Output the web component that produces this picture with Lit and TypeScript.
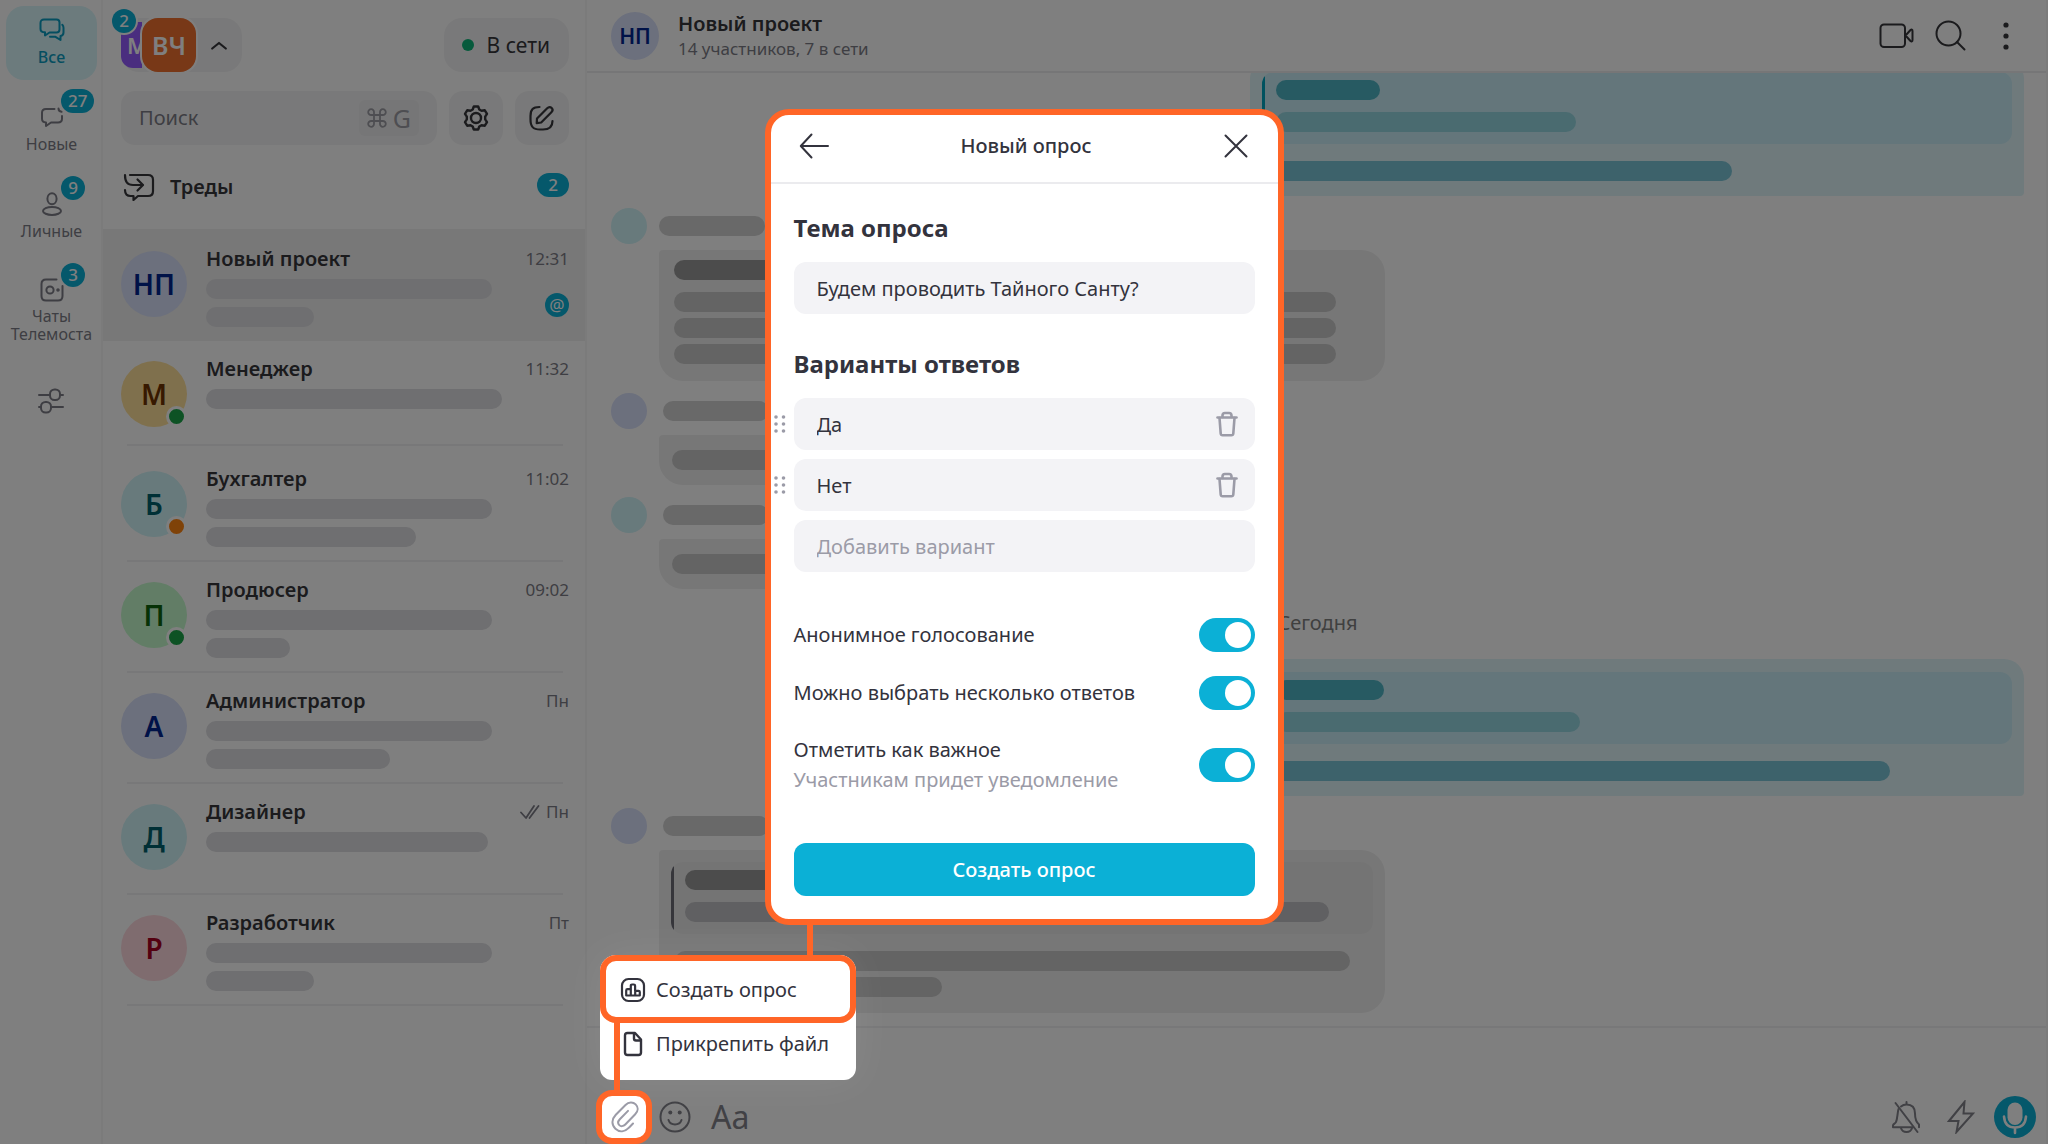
import { LitElement, html, css, svg, nothing, TemplateResult } from "lit";
import { customElement } from "lit/decorators.js";
import { classMap } from "lit/directives/class-map.js";
import { styleMap } from "lit/directives/style-map.js";

/* ---------- icons ---------- */

const icon = (w: number, h: number, body: TemplateResult, stroke = 2) => html`<svg
  width=${w}
  height=${h}
  viewBox="0 0 ${w} ${h}"
  fill="none"
  stroke="currentColor"
  stroke-width=${stroke}
  stroke-linecap="round"
  stroke-linejoin="round"
  aria-hidden="true"
>${body}</svg>`;

const icons = {
  all: icon(26, 24, svg`
    <path d="M5 1.5h12.5c2 0 3 1 3 3v7c0 2-1 3-3 3h-7L6 17.500v-3.200c-2.600 0-4.500-1-4.500-3.300V5c0-2.300 1.200-3.500 3.500-3.500z"/>
    <path d="M23.300 6.800c.8.800 1.200 1.700 1.200 3v4.700c0 2-1 3.200-3 3.500v4l-5-3.200h-5.500"/>`),
  fresh: icon(24, 22, svg`
    <path d="M14.500 3H6C3.500 3 2 4.300 2 6.800v6c0 2.400 1.300 3.600 4 3.700V20l5-3.500h7c2.500 0 4-1.200 4-3.700V10"/>
    <path d="M18.500 2.500c0 1.800 1 3 3 3.300"/>`),
  person: icon(24, 24, svg`
    <ellipse cx="12" cy="6.800" rx="4.600" ry="5.500"/>
    <ellipse cx="12" cy="18.900" rx="9" ry="4"/>`),
  telemost: icon(24, 24, svg`
    <path d="M16.500 1.500H6C3 1.500 1.500 3 1.500 6v12c0 3 1.500 4.500 4.500 4.500h12c3 0 4.500-1.500 4.500-4.500V8"/>
    <circle cx="10" cy="12" r="3.600"/><circle cx="18" cy="12" r=".8" fill="currentColor"/>`),
  sliders: icon(26, 26, svg`
    <path d="M1 7h10M22 7h3M1 19h2M13.500 19H25"/>
    <rect x="12" y="1.500" width="10" height="10.500" rx="4.500"/>
    <rect x="3" y="14" width="10" height="10.500" rx="4.500"/>`),
  up: icon(16, 9, svg`<path d="M1.200 7.500L8 2l6.800 5.500"/>`, 2.2),
  gear: icon(28, 28, svg`
    <path d="M11.800 2.500h4.400l1.100 3 2.200 1.200 3.300-.4 2.200 3.600-1.800 2.700v2.800l1.800 2.700-2.200 3.600-3.300-.4-2.200 1.200-1.100 3h-4.400l-1.100-3-2.200-1.200-3.300.4L3 18.100l1.800-2.700v-2.800L3 9.900l2.200-3.600 3.300.4 2.200-1.200z"/>
    <circle cx="14" cy="14" r="5"/>`, 2.4),
  edit: icon(28, 28, svg`
    <path d="M11.500 3C5 3 2.500 5.500 2.500 12v3.500c0 7 2.500 10 9.500 10h3c6.500 0 9.500-2.500 9.500-8.500"/>
    <path d="M9 14.500L19.200 4.200c1.600-1.600 3.200-1.500 4.500-.2s1.200 2.800-.3 4.300L13.200 18.500 8.700 19.200z"/>`, 2.2),
  threads: icon(32, 28, svg`
    <path d="M7 2h18c3 0 5 1.600 5 4.800v11.400c0 3.200-2 4.800-5 4.800H15l-4.500 4v-4H7.500C4.300 23 2 21.500 2 17"/>
    <path d="M2 2c0 7 2.500 10 8 10h9.500"/><path d="M14.500 6.500l5.500 5.500-5.500 5.500"/>`, 2.2),
  checks: icon(20, 16, svg`<path d="M1 8.500L6 14 14 2M9.500 14L18.500 2"/>`, 1.800),
  video: icon(36, 26, svg`
    <rect x="1.500" y="1.500" width="24.500" height="22.500" rx="3.500"/>
    <path d="M26.500 12.500l5-5.500c1-.9 2-.5 2 .9v9.200c0 1.400-1 1.800-2 .9z"/>`),
  search: icon(32, 32, svg`<circle cx="13.500" cy="13.500" r="12"/><path d="M22 22l7.500 7.500"/>`),
  dots: icon(8, 30, svg`<g fill="currentColor" stroke="none"><circle cx="4" cy="4" r="2.600"/><circle cx="4" cy="15" r="2.600"/><circle cx="4" cy="26" r="2.600"/></g>`),
  clip: icon(30, 32, svg`
    <path d="M24 22.500l-3.600 3.700c-4.600 4.700-10 5.300-14 1.600-4.100-3.800-3.900-9.500.4-14L16.500 4c3.200-3.200 7.500-3.300 10.200-.6s2.600 6.700-.5 9.900L16.300 23.500c-2 2-4.500 2.100-6 .6s-1.400-3.900.5-5.900l8.200-8.300"/>`),
  smile: icon(32, 32, svg`
    <circle cx="16" cy="16" r="14.500"/><path d="M9.500 19c1 3 3.500 4.500 6.500 4.500s5.500-1.500 6.500-4.500"/>
    <g fill="currentColor" stroke="none"><circle cx="11.300" cy="11.500" r="2"/><circle cx="20.700" cy="11.500" r="2"/></g>`),
  mute: icon(30, 34, svg`
    <path d="M15.500 2v2.500M10 6.500c1.500-1.300 3.300-2 5.500-2 5.500 0 8.500 3.500 8.500 9 0 5 1 8.500 4 11v2.800M7.500 9c-1.200 4.500-1 9.500-2.500 13-.6 1.500-3 2-3 3.500v1.800h20"/>
    <path d="M10 28c.8 3 2.500 4 5.500 4s4.700-1 5.500-4M4.500 3L26.500 32"/>`),
  bolt: icon(28, 34, svg`<path d="M17.500 2L2 21h9.500L9.500 32 26 13.500h-9.500z" stroke-linejoin="miter"/>`),
  mic: icon(42, 42, svg`
    <circle cx="21" cy="21" r="21" fill="#0ab0d6" stroke="none"/>
    <rect x="13.500" y="6.500" width="15" height="22.500" rx="7.500" fill="#fff" stroke="none"/>
    <path d="M10 20.500C10.500 28 14.500 31.500 21 31.500S31.500 28 32 20.500M21 31.500V37" stroke="#fff" stroke-width="2.600"/>`),
  back: icon(30, 26, svg`<path d="M29 13H2M12.500 1.500L1.800 13l10.700 11.500"/>`),
  close: icon(24, 24, svg`<path d="M1.500 1.500l21 21M22.500 1.500l-21 21"/>`),
  trash: icon(22, 26, svg`
    <path d="M1.500 6.500h19"/><path d="M6.500 6V4.500C6.500 2.800 7.500 2 9 2h4c1.500 0 2.500.8 2.500 2.500V6"/>
    <path d="M3.500 7l1.200 15.500c.1 1.300.7 1.800 2 1.800h8.600c1.300 0 1.900-.5 2-1.800L18.500 7"/>`, 2.600),
  grip: icon(12, 18, svg`<g fill="currentColor" stroke="none">
    <circle cx="2" cy="2" r="1.800"/><circle cx="9.500" cy="2" r="1.800"/>
    <circle cx="2" cy="9" r="1.800"/><circle cx="9.500" cy="9" r="1.800"/>
    <circle cx="2" cy="16" r="1.800"/><circle cx="9.500" cy="16" r="1.800"/></g>`),
  poll: icon(26, 26, svg`
    <rect x="2" y="2" width="22" height="22" rx="6.500"/>
    <path d="M6.200 18.500v-5c0-.9.500-1.300 1.300-1.300h3.300V8.800c0-.9.400-1.300 1.200-1.300h1.800c.8 0 1.300.4 1.300 1.300v5h3.400c.9 0 1.300.5 1.300 1.300v3.400zM10.800 12.200v6M15.200 13.800v4.500"/>`, 2.200),
  file: icon(26, 26, svg`
    <path d="M5 4.500C5 3 5.800 2 7.500 2H15l6 6.500v13c0 1.700-.8 2.500-2.500 2.500h-11C5.800 24 5 23.200 5 21.500z"/>
    <path d="M14 2.500v5c0 1.400.6 2 2 2h4.500"/>`, 2.400),
  command: icon(20, 20, svg`<path d="M7 7h6v6H7zM7 7H4.300A2.900 2.900 0 1 1 7 4.300zM13 7h2.700A2.900 2.900 0 1 0 13 4.300zM7 13H4.300A2.900 2.900 0 1 0 7 15.700zM13 13h2.700A2.900 2.900 0 1 1 13 15.700z"/>`, 1.800),
};

/* ---------- data ---------- */

interface ChatRow {
  name: string;
  letters: string;
  tone: string;
  time: string;
  bars: number[];
  presence?: "online" | "away";
  selected?: boolean;
  read?: boolean;
  short?: boolean;
}

const CHATS: ChatRow[] = [
  { name: "Новый проект", letters: "НП", tone: "blue", time: "12:31", bars: [286, 108], selected: true },
  { name: "Менеджер", letters: "М", tone: "amber", time: "11:32", bars: [296], presence: "online", short: true },
  { name: "Бухгалтер", letters: "Б", tone: "aqua", time: "11:02", bars: [286, 210], presence: "away" },
  { name: "Продюсер", letters: "П", tone: "green", time: "09:02", bars: [286, 84], presence: "online" },
  { name: "Администратор", letters: "А", tone: "blue", time: "Пн", bars: [286, 184] },
  { name: "Дизайнер", letters: "Д", tone: "aqua", time: "Пн", bars: [282], read: true },
  { name: "Разработчик", letters: "Р", tone: "rose", time: "Пт", bars: [286, 108] },
];

const NAV = [
  { label: "Все", glyph: icons.all, active: true },
  { label: "Новые", glyph: icons.fresh, count: 27 },
  { label: "Личные", glyph: icons.person, count: 9 },
  { label: "Чаты Телемоста", glyph: icons.telemost, count: 3 },
];

const bar = (width: number, tone = "") =>
  html`<span class="bar ${tone}" style=${styleMap({ width: `${width}px` })}></span>`;

/* ---------- poll dialog ---------- */

@customElement("poll-dialog")
export class PollDialog extends LitElement {
  static styles = css`
    :host {
      display: block;
      box-sizing: border-box;
      border: 6px solid #ff6527;
      border-radius: 24px;
      background: #fff;
      color: #33333d;
      font: 400 20px/30px "Noto Sans", sans-serif;
    }
    * { box-sizing: border-box; }
    button { border: 0; padding: 0; background: none; color: inherit; font: inherit; cursor: pointer; }
    svg { display: block; }
    .head {
      display: flex;
      align-items: center;
      justify-content: space-between;
      height: 69px;
      padding: 0 30px 5px 28px;
      border-bottom: 2px solid #ebebee;
    }
    .title { margin: 0; font-size: 20px; font-weight: 500; }
    .body { display: flex; flex-direction: column; padding: 28px 23px 23px; }
    .caption { margin: 0 0 18px; font-size: 24px; line-height: 32px; font-weight: 700; }
    .field {
      display: block;
      width: 100%;
      height: 52px;
      padding: 0 23px;
      border: 0;
      border-radius: 12px;
      background: #f3f3f6;
      color: inherit;
      font: inherit;
      outline: none;
    }
    .field::placeholder { color: #9b9ba7; opacity: 1; }
    .options { display: flex; flex-direction: column; gap: 9px; margin: 0; padding: 0; list-style: none; }
    .option { position: relative; }
    .section { margin-bottom: 34px; }
    .grip { position: absolute; left: -20px; top: 17px; color: #9b9ba7; }
    .trash { position: absolute; right: 17px; top: 13px; color: #9b9ba7; }
    .switch { display: flex; align-items: center; justify-content: space-between; min-height: 58px; }
    .switch.tall { min-height: 86px; }
    .hint { display: block; color: #9b9ba7; }
    .toggle {
      appearance: none;
      display: flex;
      justify-content: flex-end;
      align-items: center;
      width: 56px;
      height: 34px;
      margin: 0;
      padding: 4px;
      border-radius: 17px;
      background: #0bb0d6;
      cursor: pointer;
    }
    .toggle::before { content: ""; width: 26px; height: 26px; border-radius: 50%; background: #fff; }
    .toggle:not(:checked) { justify-content: flex-start; background: #c8c8d0; }
    .submit {
      height: 53px;
      margin-top: 35px;
      border-radius: 12px;
      background: #0bb0d6;
      color: #fff;
      font-weight: 500;
    }
  `;

  render() {
    return html`
      <header class="head">
        <button aria-label="Назад">${icons.back}</button>
        <h2 class="title">Новый опрос</h2>
        <button aria-label="Закрыть">${icons.close}</button>
      </header>
      <form class="body" @submit=${(e: Event) => e.preventDefault()}>
        <div class="section">
          <h3 class="caption"><label for="topic">Тема опроса</label></h3>
          <input class="field" id="topic" type="text" value="Будем проводить Тайного Санту?" />
        </div>
        <div class="section">
          <h3 class="caption">Варианты ответов</h3>
          <ul class="options">
            ${["Да", "Нет"].map(
              (answer, i) => html`<li class="option">
                <span class="grip">${icons.grip}</span>
                <input class="field" type="text" value=${answer} aria-label="Вариант ${i + 1}" />
                <button class="trash" type="button" aria-label="Удалить вариант ${i + 1}">${icons.trash}</button>
              </li>`
            )}
            <li class="option">
              <input class="field" type="text" placeholder="Добавить вариант" aria-label="Добавить вариант" />
            </li>
          </ul>
        </div>
        <label class="switch" for="anonymous">
          <span>Анонимное голосование</span>
          <input class="toggle" id="anonymous" type="checkbox" checked />
        </label>
        <label class="switch" for="multiple">
          <span>Можно выбрать несколько ответов</span>
          <input class="toggle" id="multiple" type="checkbox" checked />
        </label>
        <label class="switch tall" for="important">
          <span>Отметить как важное<span class="hint">Участникам придет уведомление</span></span>
          <input class="toggle" id="important" type="checkbox" checked />
        </label>
        <button class="submit" type="submit">Создать опрос</button>
      </form>
    `;
  }
}

/* ---------- messenger ---------- */

@customElement("app-root")
export class AppRoot extends LitElement {
  static styles = css`
    :host {
      position: relative;
      display: grid;
      grid-template-columns: 103px 484px minmax(0, 1fr);
      grid-template-rows: minmax(0, 1fr);
      height: 100vh;
      overflow: hidden;
      background: #fff;
      color: #36363b;
      font: 400 20px/26px "Noto Sans", sans-serif;
    }
    * { box-sizing: border-box; }
    button { border: 0; padding: 0; background: none; color: inherit; font: inherit; cursor: pointer; }
    svg { display: block; flex: none; }

    .dim { position: absolute; inset: 0; z-index: 1; background: rgba(0, 0, 0, 0.5); }
    .dialog { position: absolute; z-index: 2; top: 109px; left: 0; right: 0; width: 519px; margin: 0 auto; }

    .count {
      display: inline-flex;
      align-items: center;
      justify-content: center;
      min-width: 24px;
      height: 24px;
      padding: 0 7px;
      border-radius: 12px;
      background: #0ab0d6;
      color: #fff;
      font-size: 17px;
      line-height: 24px;
      font-weight: 500;
    }

    /* rail */
    .rail {
      display: flex;
      flex-direction: column;
      gap: 13px;
      padding: 6px;
      border-right: 2px solid #f6f6f7;
      color: #7c7c86;
    }
    .tab {
      position: relative;
      display: flex;
      flex-direction: column;
      align-items: center;
      gap: 5px;
      width: 91px;
      height: 74px;
      padding-top: 11px;
      border-radius: 18px;
      font-size: 16px;
      line-height: 18px;
    }
    .tab.active { background: #d8f6fb; color: #0a9cc0; font-weight: 500; }
    .tab .glyph { display: grid; place-items: center; height: 26px; }
    .tab .label { margin: 0 -4px; }
    .tab .count { position: absolute; left: 55px; top: -4px; }
    .filters { padding-top: 34px; align-self: center; }

    /* chat list */
    .list { border-right: 2px solid #f6f6f7; }
    .top { display: flex; justify-content: space-between; padding: 18px 16px 0 18px; }
    .account {
      position: relative;
      display: flex;
      align-items: center;
      height: 54px;
      padding-right: 15px;
      border-radius: 18px;
      background: #f3f3f4;
      color: #fff;
      font-weight: 600;
    }
    .space {
      display: flex;
      align-items: center;
      width: 21px;
      height: 46px;
      padding-left: 6px;
      border-radius: 12px 0 0 12px;
      background: #945aff;
      font-size: 22px;
    }
    .current {
      position: relative;
      display: grid;
      place-items: center;
      width: 54px;
      height: 54px;
      margin-right: 15px;
      border-radius: 16px;
      background: #f0702e;
      box-shadow: 0 0 0 2px #fff;
      font-size: 25px;
    }
    .account .count { position: absolute; left: -9px; top: -9px; box-shadow: 0 0 0 2px #fff; }
    .chevron { color: #36363b; }
    .status {
      display: flex;
      align-items: center;
      gap: 13px;
      height: 54px;
      padding: 0 19px 0 18px;
      border-radius: 18px;
      background: #f3f3f4;
      font-size: 21px;
    }
    .status::before { content: ""; width: 12px; height: 12px; border-radius: 50%; background: #0cb478; }
    .tools { display: flex; gap: 12px; padding: 19px 16px 0 18px; }
    .search {
      display: flex;
      flex: 1;
      align-items: center;
      min-width: 0;
      height: 54px;
      padding: 0 18px;
      border-radius: 14px;
      background: #f3f3f4;
    }
    .query { flex: 1; min-width: 0; padding: 0; border: 0; background: none; font: inherit; color: inherit; outline: none; }
    .query::placeholder { color: #7c7c86; opacity: 1; }
    .keys {
      display: flex;
      align-items: center;
      gap: 6px;
      height: 36px;
      padding: 0 8px;
      border-radius: 6px;
      background: #ededee;
      color: #9c9ca4;
      font-size: 25px;
    }
    .tool { display: grid; place-items: center; width: 54px; height: 54px; border-radius: 14px; background: #f3f3f4; }
    .threads {
      display: flex;
      align-items: center;
      width: 100%;
      height: 84px;
      padding: 0 16px 0 20px;
      text-align: left;
    }
    .threads .name { flex: 1; padding-left: 15px; }
    .threads .count { min-width: 32px; margin-bottom: 4px; }

    .rows { margin: 0; padding: 0; list-style: none; }
    .row { position: relative; display: flex; height: 111px; padding: 20px 16px 0 18px; }
    .row::after { content: ""; position: absolute; left: 24px; right: 22px; bottom: 0; height: 2px; background: #f0f0f2; }
    .row.short { height: 105px; margin-bottom: 5px; }
    .row.selected { height: 112px; padding-top: 22px; background: #f0f0f0; }
    .row.selected::after { display: none; }
    .avatar {
      position: relative;
      flex: none;
      width: 66px;
      height: 66px;
      border-radius: 50%;
      font-size: 28px;
      line-height: 66px;
      font-weight: 600;
      text-align: center;
    }
    .avatar.small { width: 48px; height: 48px; font-size: 21px; line-height: 48px; }
    .avatar.tiny { width: 36px; height: 36px; }
    .blue { background: #d8e0fa; color: #002490; }
    .amber { background: #fee09a; color: #6e3200; }
    .aqua { background: #d0f4f8; color: #00606c; }
    .green { background: #c4facc; color: #0c640c; }
    .rose { background: #ffd8de; color: #a80020; }
    .presence {
      position: absolute;
      left: 45px;
      top: 45px;
      width: 21px;
      height: 21px;
      border: 3px solid #fff;
      border-radius: 50%;
    }
    .online { background: #1aa448; }
    .away { background: #ff8410; }
    .summary { flex: 1; min-width: 0; padding-left: 19px; margin-top: -5px; }
    .line { display: flex; align-items: center; justify-content: space-between; margin-bottom: 7px; }
    .name { margin: 0; font-size: 20px; line-height: 26px; font-weight: 600; }
    .time { display: flex; align-items: center; gap: 6px; color: #7c7c86; font-size: 17px; }
    .mention {
      position: absolute;
      right: 16px;
      top: 64px;
      display: grid;
      place-items: center;
      width: 24px;
      height: 24px;
      border-radius: 50%;
      background: #0ab0d6;
      color: #fff;
      font-size: 17px;
      line-height: 22px;
    }
    .bar { display: block; height: 20px; border-radius: 10px; background: #dedee2; }
    .summary .bar + .bar { margin-top: 8px; }

    /* conversation */
    .chat { display: flex; flex-direction: column; min-width: 0; border-right: 2px solid #f6f6f7; }
    .head {
      display: flex;
      align-items: center;
      flex: none;
      height: 73px;
      padding: 0 36px 0 24px;
      border-bottom: 2px solid #ececee;
    }
    .about { flex: 1; padding-left: 19px; }
    .members { color: #7c7c86; font-size: 17px; line-height: 24px; margin: 0; }
    .actions { display: flex; align-items: center; }
    .actions .find { margin: 0 35px 0 20px; }
    .feed {
      display: flex;
      flex: 1;
      flex-direction: column;
      justify-content: flex-end;
      gap: 12px;
      min-height: 0;
      padding: 0 22px 13px 24px;
      overflow: hidden;
    }
    .day { height: 46px; flex: none; color: #808080; line-height: 44px; text-align: center; }
    .message { flex: none; }
    .author { display: flex; align-items: center; gap: 16px; height: 36px; margin-bottom: 6px; }
    .author.near { gap: 12px; }
    .bubble { width: fit-content; margin-left: 48px; padding: 15px 13px; border-radius: 4px 24px 24px 24px; background: #efefef; }
    .bubble.wide { width: 726px; padding: 10px 15px 17px; }
    .bubble.wide.reply { padding: 12px 12px 16px; }
    .bubble.mine { flex: none; align-self: flex-end; width: 774px; padding: 13px 12px 15px; border-radius: 20px 20px 4px 20px; background: #def5f9; }
    .bubble .bar { background: #c8c8c8; }
    .bubble .bar.dark { background: #989898; }
    .author .bar { background: #d3d3d3; }
    .bubble .bar + .bar { margin-top: 6px; }
    .bubble .bar.dark + .bar { margin-top: 12px; }
    .quote {
      height: 72px;
      margin-bottom: 17px;
      padding: 8px 14px;
      border-radius: 12px;
      background: linear-gradient(to right, #6c6c76 3px, #e9e9e9 3px);
    }
    .quote .bar { background: #c0c0c4; }
    .after { padding-left: 4px; }
    .mine .quote { background: linear-gradient(to right, #00a4be 3px, #c8ecf6 3px); }
    .mine .bar { background: #7ac4d6; }
    .mine .quote .bar { background: #94d6e0; }
    .mine .quote .bar.dark { background: #4eb4c4; }

    /* composer */
    .composer { flex: none; display: flex; flex-direction: column; border-top: 2px solid #f0f0f2; color: #82828a; }
    .draft { display: block; height: 62px; margin: 0; padding: 12px 24px; border: 0; background: none; font: inherit; resize: none; outline: none; }
    .bottom { display: flex; align-items: center; height: 54px; padding: 0 10px 0 9px; }
    .emoji { margin-left: 7px; }
    .format { margin-left: 20px; font-size: 32px; line-height: 40px; }
    .spacer { flex: 1; }
    .bolt { margin: 0 19px 0 26px; }

    .attach { position: relative; z-index: 2; color: #9b9ba7; }
    .clip {
      display: grid;
      place-items: center;
      width: 56px;
      height: 54px;
      border: 6px solid #ff6527;
      border-radius: 16px;
      background: #fff;
    }
    .menu {
      position: absolute;
      left: 4px;
      bottom: 64px;
      width: 256px;
      height: 125px;
      border-radius: 16px 16px 12px 12px;
      background: #fff;
      box-shadow: 0 0 40px rgba(255, 255, 255, 0.08);
      color: #33333d;
    }
    .entry { display: flex; align-items: center; gap: 10px; width: 100%; height: 42px; padding-left: 20px; white-space: nowrap; font-size: 20px; }
    .entry.marked {
      height: 68px;
      padding: 2px 0 0 14px;
      border: 6px solid #ff6527;
      border-radius: 16px;
      background: #fff;
    }
    .menu::before, .menu::after { content: ""; position: absolute; width: 6px; background: #ff6527; }
    .menu::before { left: 207px; bottom: 124px; height: 32px; }
    .menu::after { left: 14px; top: 67px; height: 68px; }
  `;

  private renderRow(c: ChatRow) {
    return html`<li class=${classMap({ row: true, selected: !!c.selected, short: !!c.short })}>
      <div class="avatar ${c.tone}">
        ${c.letters}${c.presence ? html`<span class="presence ${c.presence}"></span>` : nothing}
      </div>
      <div class="summary">
        <div class="line">
          <h3 class="name">${c.name}</h3>
          <span class="time">${c.read ? icons.checks : nothing}${c.time}</span>
        </div>
        ${c.bars.map((w) => bar(w))}
      </div>
      ${c.selected ? html`<span class="mention">@</span>` : nothing}
    </li>`;
  }

  private renderAuthor(tone: string, near = false) {
    return html`<div class=${classMap({ author: true, near })}>
      <span class="avatar tiny ${tone}"></span>${bar(106)}
    </div>`;
  }

  private renderMine(title: number, quote: number, text: number) {
    return html`<div class="bubble mine">
      <div class="quote">${bar(title, "dark")}${bar(quote)}</div>
      <div class="after">${bar(text)}</div>
    </div>`;
  }

  private renderShort(tone: string) {
    return html`<div class="message">${this.renderAuthor(tone)}<div class="bubble">${bar(240)}</div></div>`;
  }

  render() {
    return html`
      <nav class="rail">
        ${NAV.map(
          (n) => html`<button class=${classMap({ tab: true, active: !!n.active })}>
            <span class="glyph">${n.glyph}</span><span class="label">${n.label}</span>
            ${n.count ? html`<span class="count">${n.count}</span>` : nothing}
          </button>`
        )}
        <button class="filters" aria-label="Фильтры">${icons.sliders}</button>
      </nav>

      <aside class="list">
        <div class="top">
          <button class="account">
            <span class="space">М</span><span class="current">ВЧ</span>
            <span class="chevron">${icons.up}</span><span class="count">2</span>
          </button>
          <button class="status">В сети</button>
        </div>
        <div class="tools">
          <div class="search">
            <input class="query" type="text" placeholder="Поиск" aria-label="Поиск" />
            <span class="keys">${icons.command}<span>G</span></span>
          </div>
          <button class="tool" aria-label="Настройки">${icons.gear}</button>
          <button class="tool" aria-label="Написать">${icons.edit}</button>
        </div>
        <button class="threads">${icons.threads}<span class="name">Треды</span><span class="count">2</span></button>
        <ul class="rows">${CHATS.map((c) => this.renderRow(c))}</ul>
      </aside>

      <main class="chat">
        <header class="head">
          <div class="avatar small blue">НП</div>
          <div class="about">
            <h1 class="name">Новый проект</h1>
            <p class="members">14 участников, 7 в сети</p>
          </div>
          <div class="actions">
            <button aria-label="Видеозвонок">${icons.video}</button>
            <button class="find" aria-label="Найти">${icons.search}</button>
            <button aria-label="Ещё">${icons.dots}</button>
          </div>
        </header>

        <section class="feed">
          ${this.renderMine(104, 300, 466)}
          <div class="message">
            ${this.renderAuthor("aqua", true)}
            <div class="bubble wide">${bar(400, "dark")}${bar(662)}${bar(662)}${bar(662)}</div>
          </div>
          ${this.renderShort("blue")}
          ${this.renderShort("aqua")}
          <div class="day">Сегодня</div>
          ${this.renderMine(108, 304, 624)}
          <div class="message">
            ${this.renderAuthor("blue")}
            <div class="bubble wide reply">
              <div class="quote">${bar(400, "dark")}${bar(644)}</div>
              <div class="after">${bar(675)}${bar(267)}</div>
            </div>
          </div>
        </section>

        <footer class="composer">
          <textarea class="draft" aria-label="Сообщение"></textarea>
          <div class="bottom">
            <div class="attach">
              <button class="clip" aria-label="Прикрепить">${icons.clip}</button>
              <div class="menu">
                <button class="entry marked">${icons.poll}<span>Создать опрос</span></button>
                <button class="entry">${icons.file}<span>Прикрепить файл</span></button>
              </div>
            </div>
            <button class="emoji" aria-label="Эмодзи">${icons.smile}</button>
            <button class="format" aria-label="Форматирование">Aa</button>
            <span class="spacer"></span>
            <button aria-label="Без звука">${icons.mute}</button>
            <button class="bolt" aria-label="Команды">${icons.bolt}</button>
            <button aria-label="Голосовое сообщение">${icons.mic}</button>
          </div>
        </footer>
      </main>

      <div class="dim"></div>
      <poll-dialog class="dialog" role="dialog" aria-label="Новый опрос"></poll-dialog>
    `;
  }
}
